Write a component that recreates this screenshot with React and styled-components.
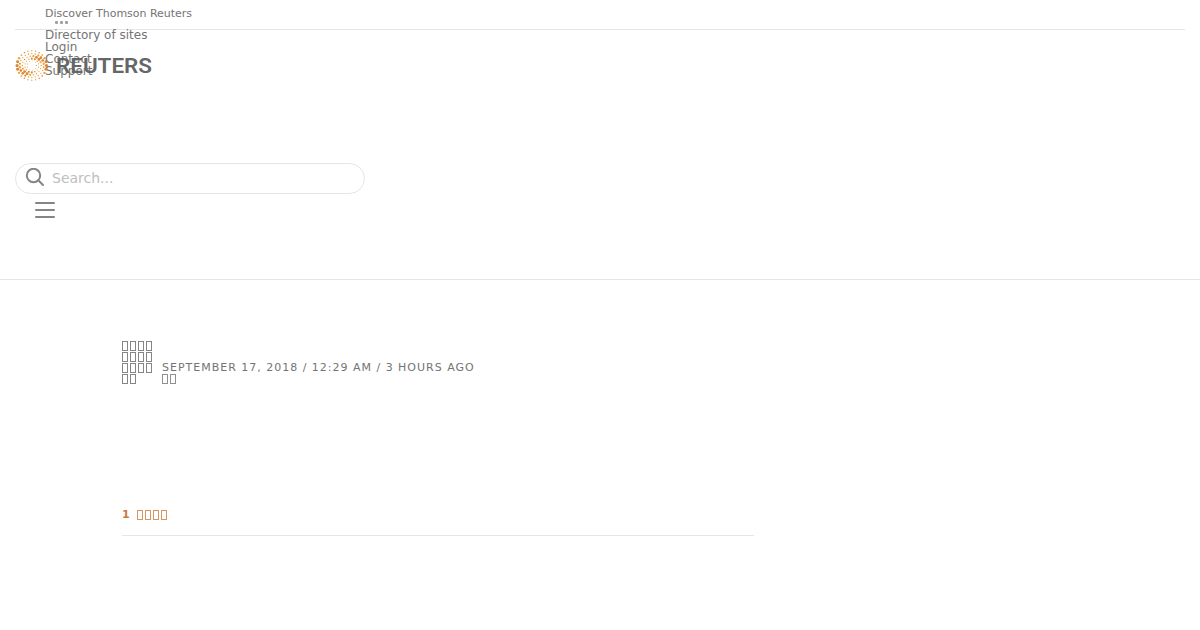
import React from 'react';
import styled, { createGlobalStyle } from 'styled-components';

const GlobalStyle = createGlobalStyle`
  * {
    box-sizing: border-box;
  }
  body {
    margin: 0;
    background: #fff;
    color: #747474;
    font-family: 'DejaVu Sans', sans-serif;
    font-size: 12px;
    line-height: 12px;
  }
`;

const links = ['Directory of sites', 'Login', 'Contact', 'Support'];

// radius, number of dots, dot size and the angle where the dots are biggest
const rings = [
  { radius: 14.7, count: 24, size: 0.7, grow: 0.9, peak: 0 },
  { radius: 12, count: 22, size: 0.65, grow: 0.7, peak: -0.5 },
  { radius: 9.4, count: 18, size: 0.65, grow: 0.8, peak: -0.9 },
  { radius: 6.9, count: 14, size: 0.6, grow: 0.5, peak: -1.3 },
  { radius: 4.7, count: 9, size: 0.45, grow: 0.1, peak: 0 },
];

const dots = rings.flatMap(({ radius, count, size, grow, peak }, ring) =>
  Array.from({ length: count }, (_, i) => {
    const angle = ((i + ring * 0.5) / count) * Math.PI * 2;
    const weight = Math.cos(angle - peak) ** 4;
    return {
      x: 16.8 + Math.cos(angle) * radius,
      y: 16.5 + Math.sin(angle) * radius,
      r: size + weight * grow,
      fill: weight > 0.8 || (i + ring) % 4 === 0 ? '#dc8430' : '#e9a740',
    };
  })
);

const Boxes = ({ count }) => (
  <BoxRow>
    {Array.from({ length: count }, (_, i) => (
      <Box key={i} />
    ))}
  </BoxRow>
);

const App = () => {
  return (
    <>
      <GlobalStyle />
      <Header>
        <TopBar>
          <DiscoverLink>Discover Thomson Reuters</DiscoverLink>
          <Dots>
            <Dot />
            <Dot />
            <Dot />
          </Dots>
          {links.map((link) => (
            <NavLink key={link}>{link}</NavLink>
          ))}
        </TopBar>
        <Logo viewBox="0 0 140 34">
          {dots.map((dot, index) => (
            <circle key={index} cx={dot.x} cy={dot.y} r={dot.r} fill={dot.fill} />
          ))}
          <LogoText x="41" y="23.7" textLength="96" lengthAdjust="spacingAndGlyphs">
            REUTERS
          </LogoText>
        </Logo>
        <SearchBox>
          <SearchIcon viewBox="0 0 20 20">
            <circle cx="8.5" cy="7.5" r="6.7" />
            <path d="M13.3 12.3L18 17" />
          </SearchIcon>
          <SearchInput placeholder="Search..." />
        </SearchBox>
        <MenuButton>
          <MenuLine />
          <MenuLine />
          <MenuLine />
        </MenuButton>
      </Header>
      <Article>
        <Meta>
          <Channel>
            <Boxes count={4} />
            <Boxes count={4} />
            <Boxes count={4} />
            <Boxes count={2} />
          </Channel>
          <DateLine>
            <div>SEPTEMBER 17, 2018 / 12:29 AM / 3 HOURS AGO</div>
            <Boxes count={2} />
          </DateLine>
        </Meta>
        <ReadTime>
          <ReadCount>1</ReadCount>
          <Boxes count={4} />
        </ReadTime>
      </Article>
    </>
  );
};

export default App;

const Header = styled.header`
  height: 280px;
  padding: 0 15px;
  border-bottom: 1px solid #e6e6e6;
`;

const TopBar = styled.nav`
  height: 30px;
  padding: 7px 0 0 30px;
  border-bottom: 1px solid #e6e6e6;
`;

const DiscoverLink = styled.div`
  height: 14px;
  font-size: 11px;
  line-height: 14px;
  letter-spacing: -0.03px;
`;

const Dots = styled.div`
  display: flex;
  gap: 2px;
  height: 8px;
  padding-left: 10px;
`;

const Dot = styled.span`
  width: 3px;
  height: 3px;
  border-radius: 1px;
  background: #a0a0a0;
`;

const NavLink = styled.div`
  height: 12px;
`;

const Logo = styled.svg`
  display: block;
  width: 140px;
  height: 34px;
  margin: 19px 0 80px;
`;

const LogoText = styled.text`
  font-family: Roboto, sans-serif;
  font-size: 20.5px;
  font-weight: 600;
  fill: #666;
`;

const SearchBox = styled.label`
  display: flex;
  width: 350px;
  height: 31px;
  padding: 4px 9px;
  border: 1px solid #e6e6e6;
  border-radius: 16px;
`;

const SearchIcon = styled.svg`
  flex: none;
  width: 20px;
  height: 20px;
  margin-right: 7px;
  fill: none;
  stroke: #858585;
  stroke-width: 2;
  stroke-linecap: round;
`;

const SearchInput = styled.input`
  width: 280px;
  height: 20px;
  padding: 0;
  border: 0;
  outline: none;
  background: none;
  font-family: 'DejaVu Sans', sans-serif;
  font-size: 14px;

  &::placeholder {
    color: #bebebe;
  }
`;

const MenuButton = styled.div`
  display: flex;
  flex-direction: column;
  gap: 5px;
  width: 20px;
  margin: 8px 0 0 20px;
`;

const MenuLine = styled.span`
  height: 2px;
  border-radius: 1px;
  background: #858585;
`;

const Article = styled.main`
  width: 632px;
  margin: 61px 0 0 122px;
`;

const Meta = styled.div`
  display: flex;
  align-items: flex-end;
  height: 44px;
  font-size: 11px;
  line-height: 12px;
  letter-spacing: 0.99px;
`;

const Channel = styled.div`
  width: 40px;
  color: #666;
`;

const DateLine = styled.div`
  line-height: 12px;
`;

const BoxRow = styled.div`
  display: flex;
  gap: 2px;
  height: 11px;
`;

const Box = styled.span`
  width: 6px;
  height: 10px;
  border: 1px solid currentColor;
  opacity: 0.8;
`;

const ReadTime = styled.div`
  display: flex;
  height: 29px;
  margin-top: 122px;
  padding-top: 3px;
  border-bottom: 1px solid #e6e6e6;
  color: #cc7a3c;
`;

const ReadCount = styled.b`
  width: 15px;
  font-size: 11px;
  line-height: 9px;
`;
